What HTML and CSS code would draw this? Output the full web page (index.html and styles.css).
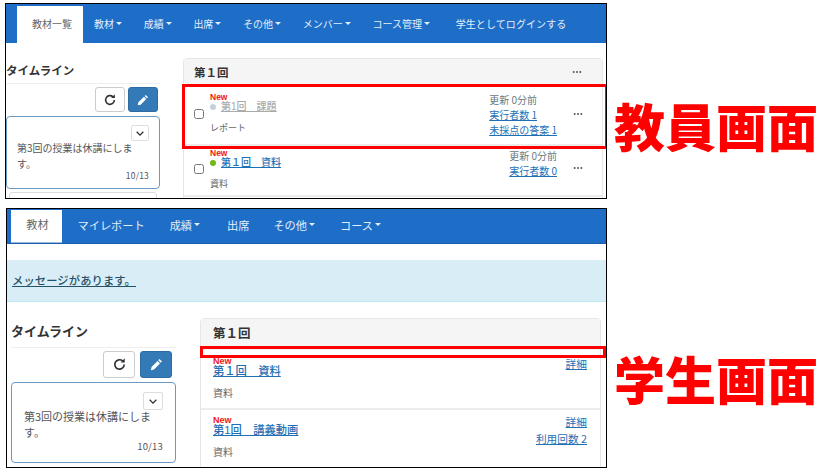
FILE: index.html
```html
<!DOCTYPE html>
<html lang="ja">
<head>
    <meta charset="UTF-8">
    <meta name="viewport" content="width=device-width, initial-scale=1.0">
    <title>教員画面と学生画面</title>
    <link rel="stylesheet" href="styles.css">
</head>
<body>
    <svg class="defs" width="0" height="0">
        <symbol id="i-refresh" viewBox="0 0 16 16">
            <path d="M13 8a5 5 0 1 1-1.6-3.7" fill="none" stroke="currentColor" stroke-width="1.8"/>
            <path d="M13.6 1.4v4.4H9.2z" fill="currentColor"/>
        </symbol>
        <symbol id="i-pencil" viewBox="0 0 16 16">
            <path d="M11.2 2.2l2.6 2.6-1.3 1.3-2.6-2.6zM9.1 4.3l2.6 2.6-6.4 6.4-3.3.7.7-3.3z" fill="currentColor"/>
        </symbol>
        <symbol id="i-chevron" viewBox="0 0 12 8">
            <path d="M2 2l4 4 4-4" fill="none" stroke="currentColor" stroke-width="1.6"/>
        </symbol>
        <symbol id="i-dots" viewBox="0 0 12 4">
            <circle cx="2" cy="2" r="1.2" fill="currentColor"/>
            <circle cx="6" cy="2" r="1.2" fill="currentColor"/>
            <circle cx="10" cy="2" r="1.2" fill="currentColor"/>
        </symbol>
    </svg>

    <section class="row row-teacher">
        <div class="shot shot-teacher">
            <nav class="nav">
                <a class="tab">教材一覧</a>
                <a class="nav-item drop">教材</a>
                <a class="nav-item drop">成績</a>
                <a class="nav-item drop">出席</a>
                <a class="nav-item drop">その他</a>
                <a class="nav-item drop">メンバー</a>
                <a class="nav-item drop">コース管理</a>
                <a class="nav-item last">学生としてログインする</a>
            </nav>
            <div class="content">
                <aside class="side">
                    <h3 class="side-title">タイムライン</h3>
                    <div class="side-btns">
                        <button class="btn"><svg class="btn-icon"><use href="#i-refresh"/></svg></button>
                        <button class="btn btn-blue"><svg class="btn-icon"><use href="#i-pencil"/></svg></button>
                    </div>
                    <div class="note">
                        <button class="note-toggle"><svg class="chevron"><use href="#i-chevron"/></svg></button>
                        <p class="note-text">第3回の授業は休講にします。</p>
                        <p class="note-date">10/13</p>
                    </div>
                    <div class="note-next"></div>
                </aside>
                <div class="panel">
                    <div class="panel-head">
                        <span>第１回</span>
                        <svg class="dots"><use href="#i-dots"/></svg>
                    </div>
                    <div class="item item-first">
                        <input class="check" type="checkbox">
                        <div class="item-main">
                            <div class="new">New</div>
                            <div class="item-title"><i class="dot dot-grey"></i><a class="link-grey">第1回　課題</a></div>
                            <div class="item-type">レポート</div>
                        </div>
                        <div class="item-meta">
                            <div class="muted">更新 0分前</div>
                            <a>実行者数 1</a>
                            <a>未採点の答案 1</a>
                        </div>
                        <svg class="dots"><use href="#i-dots"/></svg>
                    </div>
                    <div class="item item-second">
                        <input class="check" type="checkbox">
                        <div class="item-main">
                            <div class="new">New</div>
                            <div class="item-title"><i class="dot dot-green"></i><a>第１回　資料</a></div>
                            <div class="item-type">資料</div>
                        </div>
                        <div class="item-meta">
                            <div class="muted">更新 0分前</div>
                            <a>実行者数 0</a>
                        </div>
                        <svg class="dots"><use href="#i-dots"/></svg>
                    </div>
                </div>
            </div>
            <div class="mark mark-teacher"></div>
        </div>
        <div class="label">教員画面</div>
    </section>

    <section class="row row-student">
        <div class="shot shot-student">
            <nav class="nav">
                <a class="tab">教材</a>
                <a class="nav-item">マイレポート</a>
                <a class="nav-item drop">成績</a>
                <a class="nav-item">出席</a>
                <a class="nav-item drop">その他</a>
                <a class="nav-item drop">コース</a>
            </nav>
            <div class="message"><a>メッセージがあります。</a></div>
            <div class="content">
                <aside class="side">
                    <h3 class="side-title">タイムライン</h3>
                    <div class="side-btns">
                        <button class="btn"><svg class="btn-icon"><use href="#i-refresh"/></svg></button>
                        <button class="btn btn-blue"><svg class="btn-icon"><use href="#i-pencil"/></svg></button>
                    </div>
                    <div class="note">
                        <button class="note-toggle"><svg class="chevron"><use href="#i-chevron"/></svg></button>
                        <p class="note-text">第3回の授業は休講にします。</p>
                        <p class="note-date">10/13</p>
                    </div>
                </aside>
                <div class="panel">
                    <div class="panel-head">
                        <span>第１回</span>
                    </div>
                    <div class="item item-first">
                        <div class="item-main">
                            <div class="new">New</div>
                            <div class="item-title"><a>第１回　資料</a></div>
                            <div class="item-type">資料</div>
                        </div>
                        <div class="item-meta">
                            <a>詳細</a>
                        </div>
                    </div>
                    <div class="item item-second">
                        <div class="item-main">
                            <div class="new">New</div>
                            <div class="item-title"><a>第1回　講義動画</a></div>
                            <div class="item-type">資料</div>
                        </div>
                        <div class="item-meta">
                            <a>詳細</a>
                            <a>利用回数 2</a>
                        </div>
                    </div>
                </div>
            </div>
            <div class="mark mark-student"></div>
        </div>
        <div class="label">学生画面</div>
    </section>
</body>
</html>
```

FILE: styles.css
```css
* {
    box-sizing: border-box;
}
body {
    margin: 0;
    background: #fff;
    color: #555;
    font-family: "Noto Sans CJK JP", "Noto Sans", sans-serif;
    font-size: 10px;
}
.defs {
    position: absolute;
}
a {
    color: #1f6fb5;
    text-decoration: underline;
}
p {
    margin: 0;
}

.row {
    display: flex;
    align-items: flex-start;
}
.row-teacher {
    margin: 3px 0 0 5px;
}
.row-student {
    margin: 9px 0 0 6px;
}
.shot {
    position: relative;
    flex: none;
    overflow: hidden;
    background: #fff;
    border: 1px solid #000;
}
.shot-teacher {
    width: 602px;
    height: 196px;
}
.shot-student {
    width: 601px;
    height: 260px;
}
.label {
    color: #f00;
    font-size: 51px;
    font-weight: 900;
    line-height: 56px;
    white-space: nowrap;
}
.row-teacher .label {
    margin: 94px 0 0 7px;
}
.row-student .label {
    margin: 142px 0 0 7px;
}

/* nav */
.nav {
    display: flex;
    align-items: stretch;
    background: #1e6ec8;
}
.nav a {
    display: flex;
    align-items: center;
    white-space: nowrap;
    text-decoration: none;
}
.tab {
    background: #fff;
    color: #666;
    justify-content: center;
}
.nav-item {
    color: #e4eefa;
}
.drop::after {
    content: "";
    margin-left: 2px;
    border-top: 3px solid currentColor;
    border-left: 3px solid transparent;
    border-right: 3px solid transparent;
}
.shot-teacher .nav {
    height: 39px;
    padding: 2px 0 0 11px;
    font-size: 10px;
}
.shot-teacher .nav a {
    padding-bottom: 2px;
}
.shot-teacher .tab {
    width: 66px;
    padding-left: 4px;
}
.shot-teacher .nav-item {
    padding-left: 11px;
    padding-right: 10.7px;
}
.shot-teacher .last {
    margin-left: 4px;
    letter-spacing: 0.1px;
}
.shot-student .nav {
    height: 35px;
    padding: 1px 0 0 4px;
    font-size: 11.2px;
    border-bottom: 1px solid #1a5fae;
}
.shot-student .nav a {
    padding-bottom: 4px;
}
.shot-student .tab {
    width: 51px;
    padding-left: 2px;
    border-bottom: 1px solid #9dbbe0;
}
.shot-student .nav-item {
    padding-left: 12.5px;
    padding-right: 12.5px;
}
.shot-student .nav-item:nth-child(2) {
    padding-left: 15.5px;
}
.shot-student .nav-item:nth-child(4) {
    margin: 0 -1px 0 2px;
}

.message {
    height: 42px;
    margin-top: 16px;
    padding: 12px 0 0 5px;
    background: #d9edf7;
    border-bottom: 1px solid #bce8f1;
    font-size: 11.3px;
    font-weight: 500;
    letter-spacing: 0.1px;
}
.message a {
    color: #245269;
}

/* body */
.content {
    display: flex;
    align-items: flex-start;
}
.side {
    flex: none;
}
.side-title {
    margin: 0;
    color: #333;
    font-weight: 700;
    border-bottom: 1px solid #eee;
}
.side-btns {
    display: flex;
    justify-content: flex-end;
}
.btn {
    display: flex;
    align-items: center;
    justify-content: center;
    padding: 0;
    color: #333;
    background: #fff;
    border: 1px solid #ccc;
    border-radius: 3px;
}
.btn-blue {
    color: #fff;
    background: #337ab7;
    border-color: #2e6da4;
}
.btn-icon {
    width: 14px;
    height: 14px;
}
.note {
    position: relative;
    background: #fff;
    border: 1px solid #6c99c4;
    border-radius: 4px;
    color: #555;
}
.note-toggle {
    display: flex;
    align-items: center;
    justify-content: center;
    padding: 0;
    color: #333;
    background: #fff;
    border: 1px solid #ddd;
    border-radius: 2px;
    margin-left: auto;
}
.chevron {
    width: 10px;
    height: 7px;
}
.note-date {
    text-align: right;
    letter-spacing: 0.2px;
}
.note-next {
    height: 20px;
    margin: 3px 3px 0;
    border: 1px solid #ddd;
    border-radius: 3px;
}

.panel {
    flex: none;
    border: 1px solid #e6e6e6;
    border-radius: 4px;
}
.panel-head {
    display: flex;
    align-items: center;
    justify-content: space-between;
    color: #333;
    background: #f5f5f5;
    font-weight: 700;
}
.dots {
    flex: none;
    width: 10px;
    height: 4px;
    color: #555;
}
.item {
    display: flex;
    align-items: flex-start;
    border-bottom: 2px solid #ececec;
}
.check {
    flex: none;
    width: 10px;
    height: 10px;
    margin: 0 6px 0 0;
}
.item-main {
    flex: 1;
}
.new {
    color: #f01818;
    font-family: "Liberation Sans", sans-serif;
    font-weight: 700;
    line-height: 1;
}
.item-title {
    display: flex;
    align-items: center;
    font-family: "Liberation Sans", "Noto Sans CJK JP", sans-serif;
    font-weight: 500;
}
.link-grey {
    color: #aaa;
}
.dot {
    flex: none;
    width: 6px;
    height: 6px;
    margin-right: 5px;
    border-radius: 50%;
}
.dot-grey {
    background: #c4d0dc;
}
.dot-green {
    background: #74b816;
}
.item-type {
    color: #666;
}
.item-meta {
    display: flex;
    flex-direction: column;
    align-items: flex-end;
}
.item-meta a {
    display: block;
}
.muted {
    color: #6b7a80;
}

/* teacher sizes */
.shot-teacher .content {
    padding-top: 15px;
}
.shot-teacher .side {
    width: 154px;
    margin-right: 23px;
}
.shot-teacher .side-title {
    height: 26px;
    font-size: 11.5px;
    line-height: 24px;
}
.shot-teacher .side-btns {
    gap: 3px;
    margin: 3px 2px 4px 0;
}
.shot-teacher .btn {
    width: 30px;
    height: 25px;
}
.shot-teacher .note {
    height: 73px;
    padding: 8px 10px 0;
}
.shot-teacher .note-toggle {
    width: 18px;
    height: 16px;
}
.shot-teacher .note-text {
    margin-top: -1px;
    font-size: 10px;
    line-height: 16px;
}
.shot-teacher .note-date {
    margin-top: -3px;
    font-size: 8.5px;
    line-height: 12px;
}
.shot-teacher .panel {
    width: 420px;
    height: 160px;
}
.shot-teacher .panel-head {
    height: 27px;
    padding: 0 20px 2px 10px;
    font-size: 11.5px;
}
.shot-teacher .item-first {
    height: 60px;
    padding: 7px 0 0 10px;
}
.shot-teacher .item-second {
    height: 51px;
    padding: 3px 0 0 10px;
}
.shot-teacher .item-first .check {
    margin-top: 16px;
}
.shot-teacher .item-second .check {
    margin-top: 15px;
}
.shot-teacher .new {
    height: 8px;
    font-size: 8.5px;
}
.shot-teacher .item-title {
    font-size: 10px;
    line-height: 11px;
}
.shot-teacher .item-type {
    margin-top: 9px;
    font-size: 9px;
}
.shot-teacher .item-meta {
    align-items: flex-start;
    margin: -1px 16px 0 0;
    font-size: 10px;
    line-height: 15px;
}
.shot-teacher .item .dots {
    margin-right: 19px;
}
.shot-teacher .item-first .dots {
    margin-top: 19px;
}
.shot-teacher .item-second .dots {
    margin-top: 17px;
}

/* student sizes */
.shot-student .content {
    padding: 16px 0 0 4px;
}
.shot-student .side {
    width: 165px;
    margin-right: 24px;
}
.shot-student .side-title {
    height: 30px;
    font-size: 13px;
    line-height: 26px;
}
.shot-student .side-btns {
    gap: 5px;
    margin: 3px 4px 4px 0;
}
.shot-student .btn {
    width: 32px;
    height: 27px;
}
.shot-student .btn-icon {
    width: 15px;
    height: 15px;
}
.shot-student .note {
    height: 81px;
    padding: 9px 12px 0;
}
.shot-student .note-toggle {
    width: 20px;
    height: 18px;
}
.shot-student .note-text {
    margin-top: -2px;
    font-size: 11px;
    line-height: 16px;
}
.shot-student .note-date {
    font-size: 9.5px;
    line-height: 12px;
}
.shot-student .panel {
    width: 401px;
    height: 160px;
}
.shot-student .panel-head {
    height: 31px;
    padding: 0 12px 4px;
    font-size: 12.5px;
}
.shot-student .item-first {
    height: 60px;
    padding: 7px 13px 0 12px;
}
.shot-student .item-second {
    height: 70px;
    padding: 6px 13px 0 12px;
}
.shot-student .new {
    height: 7px;
    font-size: 9px;
}
.shot-student .item-title {
    font-size: 11.3px;
    line-height: 14px;
}
.shot-student .item-type {
    margin-top: 7px;
    font-size: 10px;
}
.shot-student .item-meta {
    font-size: 10.7px;
    line-height: 17px;
}
.shot-student .item-first .item-meta {
    margin-top: -2px;
}
.shot-student .item-second .item-meta {
    margin-top: -3px;
}

/* red marks drawn over the screenshots */
.mark {
    position: absolute;
    border: 3px solid #f00;
}
.mark-teacher {
    left: 176px;
    top: 80px;
    width: 426px;
    height: 65px;
}
.mark-student {
    left: 193px;
    top: 137px;
    width: 406px;
    height: 12px;
}
```
